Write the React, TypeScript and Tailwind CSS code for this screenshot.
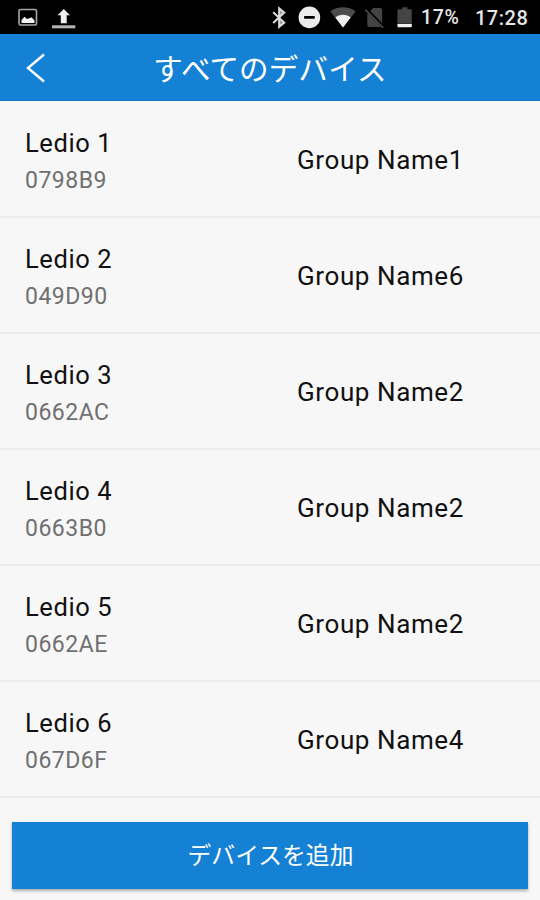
const devices = [
  { name: 'Ledio 1', id: '0798B9', group: 'Group Name1' },
  { name: 'Ledio 2', id: '049D90', group: 'Group Name6' },
  { name: 'Ledio 3', id: '0662AC', group: 'Group Name2' },
  { name: 'Ledio 4', id: '0663B0', group: 'Group Name2' },
  { name: 'Ledio 5', id: '0662AE', group: 'Group Name2' },
  { name: 'Ledio 6', id: '067D6F', group: 'Group Name4' },
]

function StatusBar() {
  return (
    <div className="flex h-[34px] items-center bg-black pl-[18px] pr-[11px] text-[#e6e6e6]">
      {/* Picture */}
      <svg className="h-[34px] w-[20px]" viewBox="0 0 20 34" fill="none">
        <rect x="1" y="9.5" width="17.5" height="15.5" rx="1.5" stroke="#a8a8a8" strokeWidth="1.6" />
        <path d="M3.5 23v-3l3-3.3 2.4 2.4L12 18l1.5-.8 3 3.2V23z" fill="#f2f2f2" />
      </svg>
      {/* Upload */}
      <svg className="ml-[14px] h-[34px] w-[24px]" viewBox="0 0 24 34">
        <path d="M11.8 9l6.2 6.2h-3.3v8.1H8.8v-8.1H5.6z" fill="#f0f0f0" />
        <rect x="0" y="25.3" width="23.3" height="3" fill="#b4b4b4" />
      </svg>

      <div className="ml-auto flex items-center">
        {/* Bluetooth */}
        <svg className="h-[34px] w-[15px]" viewBox="0 0 15 34" fill="none">
          <path d="M7.2 8.4l5 4.2L7.2 17zM7.2 18l5 4.6-5 4.2z" fill="#8c8c8c" />
          <path d="M1.2 12.2l11 10.4-5 4.2V8.4l5 4.2-11 10.4" stroke="#dcdcdc" strokeWidth="2.1" />
        </svg>
        {/* Do not disturb */}
        <svg className="ml-[11px] h-[34px] w-[23px]" viewBox="0 0 23 34">
          <circle cx="11.4" cy="17.4" r="10.8" fill="#ececec" />
          <rect x="6" y="16.1" width="10.8" height="2.6" rx="0.8" fill="#000" />
        </svg>
        {/* Wi-Fi */}
        <svg className="ml-[9px] h-[34px] w-[26px]" viewBox="0 0 26 34">
          <path d="M13 27.5L.4 11.4C4 8.7 8.2 7.3 13 7.3s9 1.4 12.6 4.1z" fill="#4c4c4c" />
          <path d="M13 27.5L5.3 17.6c2.2-1.8 4.8-2.8 7.7-2.8s5.5 1 7.7 2.8z" fill="#f0f0f0" />
        </svg>
        {/* No SIM */}
        <svg className="ml-[9px] h-[34px] w-[20px]" viewBox="0 0 20 34" fill="none">
          <path d="M8.2 8H15c1.3 0 2.2.8 2.2 2v15c0 1.3-.9 2-2.2 2H4.5c-1.3 0-2.2-.8-2.2-2V14z" fill="#444" />
          <path d="M1.2 9.3L19 27.3" stroke="#000" strokeWidth="3.2" />
          <path d="M.4 9.8L18.3 27.7" stroke="#4c4c4c" strokeWidth="1.6" />
        </svg>
        {/* Battery */}
        <svg className="ml-[12px] h-[34px] w-[16px]" viewBox="0 0 16 34">
          <path d="M5.2 7.2h5.2v2h3.2c.7 0 1.2.5 1.2 1.2v13.4H.4V10.4c0-.7.5-1.2 1.2-1.2h3.6z" fill="#444" />
          <path d="M.4 24h14.4v2c0 .8-.5 1.3-1.2 1.3h-12C.9 27.3.4 26.8.4 26z" fill="#f0f0f0" />
        </svg>
        <span className="ml-[8px] w-[41px] whitespace-nowrap pt-px text-[19.5px] font-medium leading-[34px] tracking-[0.7px]">
          17%
        </span>
        <span className="ml-[13px] w-[54px] whitespace-nowrap pt-px text-[20px] font-medium leading-[34px] tracking-[0.5px]">
          17:28
        </span>
      </div>
    </div>
  )
}

export default function App() {
  return (
    <div className="flex h-[900px] w-[540px] flex-col overflow-hidden bg-[#f7f7f7] font-['Roboto','Noto_Sans_CJK_JP',sans-serif]">
      <StatusBar />

      <header className="grid h-[67px] grid-cols-[64px_1fr_64px] items-center border-b border-[#0d74c2] bg-[#1581d4] text-white">
        <svg className="ml-[26px] mt-[2px] h-[30px] w-[20px]" viewBox="0 0 20 30" fill="none">
          <path d="M18 1.5L2 15l16 13.5" stroke="#fff" strokeWidth="2.4" />
        </svg>
        <h1 className="pt-[6px] text-center text-[29.5px] leading-[40px] tracking-[0.2px]">すべてのデバイス</h1>
      </header>

      <ul className="mt-px">
        {devices.map((device) => (
          <li key={device.id} className="flex h-[116px] items-center border-b-2 border-[#ebebeb] pl-[25px]">
            <div className="w-[272px] pt-[6px]">
              <div className="text-[25.5px] leading-[38px] tracking-[0.6px] text-[#111]">{device.name}</div>
              <div className="text-[23px] leading-[38px] tracking-[0.5px] text-[#707070]">{device.id}</div>
            </div>
            <div className="pt-[2px] text-[26px] leading-[38px] tracking-[0.6px] text-[#111]">{device.group}</div>
          </li>
        ))}
      </ul>

      <button className="mx-3 mt-6 h-[67px] bg-[#1581d4] pt-[2px] pl-px text-[23.8px] text-white shadow-[0_2px_3px_rgba(0,0,0,0.3)]">
        デバイスを追加
      </button>
    </div>
  )
}
